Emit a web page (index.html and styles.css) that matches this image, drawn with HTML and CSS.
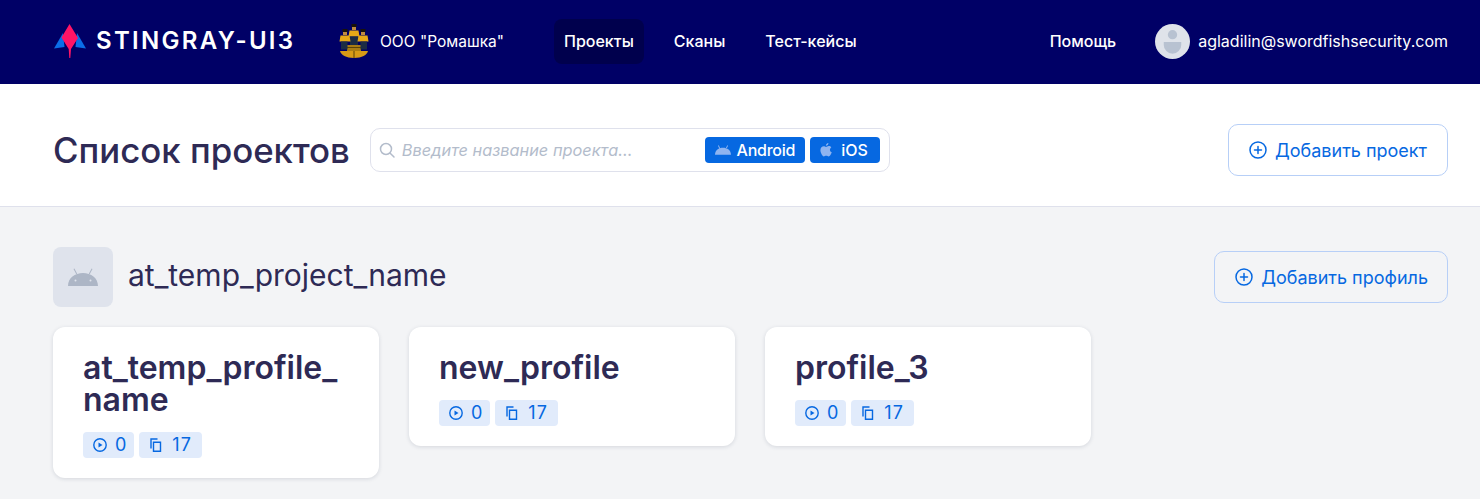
FILE: index.html
```html
<!DOCTYPE html>
<html lang="ru">
<head>
<meta charset="utf-8">
<title>Список проектов</title>
<link rel="stylesheet" href="styles.css">
</head>
<body>
<header class="topbar">
  <div class="brand">
    <svg class="brand-logo" viewBox="0 0 34 34" width="34" height="34">
      <path fill="#0b6ee8" d="M10 9 L1 24.500 L11.500 23 Z"/>
      <path fill="#0b6ee8" d="M24 9 L33 24.500 L22.500 23 Z"/>
      <path fill="#ff1466" d="M16.500 0 L25 14 L18 25 L17.300 34 L16.300 34 L15.700 25 L8.500 13.500 Z"/>
    </svg>
    <span class="brand-name">STINGRAY-UI3</span>
  </div>
  <div class="org">
    <svg class="org-logo" viewBox="0 0 30 34" width="30" height="34">
      <path fill="#d79a16" d="M1 27h28c-1 4-6 7-14 7S2 31 1 27z"/>
      <path fill="#a97c14" d="M8 21h14v6H8z"/>
      <path fill="#5a4208" d="M14.500 27h1v7h-1z"/>
      <path fill="#5a4208" d="M8 23h14v1H8z"/>
      <path fill="#1a1208" d="M12.500 0h5v3h-5z"/>
      <path fill="#c08a40" d="M13 3h4v3h-4z"/>
      <path fill="#e6a817" d="M10.500 6.500h9l1 6h-11z"/>
      <path fill="#1c2c44" d="M11 12.500h8v8.500h-8z"/>
      <path fill="#1a1208" d="M3.500 5h5v3h-5z"/>
      <path fill="#c08a40" d="M4 8h4v3H4z"/>
      <path fill="#e6a817" d="M1.500 11.500h9l1 6h-11z"/>
      <path fill="#1c2c44" d="M2 17.500h6.500v8H2z"/>
      <path fill="#1a1208" d="M21.500 5h5v3h-5z"/>
      <path fill="#c08a40" d="M22 8h4v3h-4z"/>
      <path fill="#e6a817" d="M19.500 11.500h9l1 6h-11z"/>
      <path fill="#1c2c44" d="M21.500 17.500H28v8h-6.500z"/>
    </svg>
    <span class="org-name">ООО "Ромашка"</span>
  </div>
  <nav class="nav">
    <a class="nav-item nav-item-active">Проекты</a>
    <a class="nav-item">Сканы</a>
    <a class="nav-item">Тест-кейсы</a>
  </nav>
  <div class="user-area">
    <a class="nav-item help">Помощь</a>
    <div class="user">
      <svg class="avatar" viewBox="0 0 36 36" width="35" height="35">
        <circle cx="18" cy="18" r="18" fill="#dfe3ea"/>
        <circle cx="18" cy="11" r="4.800" fill="#b8c2d1"/>
        <path fill="#b8c2d1" d="M9 18.500h18v3a9 9 0 0 1-18 0z"/>
      </svg>
      <span class="user-mail">agladilin@swordfishsecurity.com</span>
    </div>
  </div>
</header>

<section class="page-head">
  <h1 class="page-title">Список проектов</h1>
  <div class="search">
    <svg class="search-icon" viewBox="0 0 18 18" width="18" height="18">
      <circle cx="8" cy="8" r="5.500" fill="none" stroke="#b3bccb" stroke-width="1.500"/>
      <path d="M12.200 12.200 16 16" stroke="#b3bccb" stroke-width="1.500" stroke-linecap="round"/>
    </svg>
    <span class="search-text">Введите название проекта...</span>
    <span class="chip chip-android">
      <svg class="chip-icon" viewBox="0 0 30 18" width="16" height="10"><path fill="#8fb4f0" d="M0 18C0 10 7 5 15 5s15 5 15 13zM5.500 1l1.500-1 3 6-1.500 1zM24.500 1l-1.500-1-3 6 1.500 1z"/></svg>
      Android
    </span>
    <span class="chip chip-ios">
      <svg class="chip-icon" viewBox="0 0 12 14" width="12" height="14"><path fill="#8fb4f0" d="M8.400 0c.1 1.400-1 2.800-2.500 2.800C5.800 1.400 7 .1 8.400 0zM6 3.900c.6 0 1.500-.8 2.800-.8 1 0 1.900.5 2.500 1.300-2 1.200-1.700 4 .5 4.900-.6 1.700-1.800 4.100-3.200 4.100-.9 0-1.200-.6-2.400-.6s-1.600.6-2.400.6C2.600 13.400.4 10 .4 7.300c0-2.700 1.700-4.100 3.300-4.100 1 0 1.700.7 2.300.7z"/></svg>
      iOS
    </span>
  </div>
  <button class="add-btn" type="button">
    <svg class="plus-icon" viewBox="0 0 18 18" width="18" height="18"><circle cx="9" cy="9" r="8" fill="none" stroke="currentColor" stroke-width="1.500"/><path d="M9 5.500v7M5.500 9h7" stroke="currentColor" stroke-width="1.500" stroke-linecap="round"/></svg>
    Добавить проект
  </button>
</section>

<main class="content">
  <div class="project-head">
    <div class="project-icon">
      <svg viewBox="0 0 30 18" width="30" height="18"><path fill="#adb6c6" d="M0 18C0 10 7 5 15 5s15 5 15 13zM5.500 1l.9-.5 2.800 5.200-.9.500zM24.500 1l-.9-.5-2.800 5.200.9.500z"/><circle cx="7.500" cy="12.500" r="1" fill="#dfe3ec"/><circle cx="22.500" cy="12.500" r="1" fill="#dfe3ec"/></svg>
    </div>
    <h2 class="project-name">at_temp_project_name</h2>
    <button class="add-btn add-btn-profile" type="button">
      <svg class="plus-icon" viewBox="0 0 18 18" width="18" height="18"><circle cx="9" cy="9" r="8" fill="none" stroke="currentColor" stroke-width="1.500"/><path d="M9 5.500v7M5.500 9h7" stroke="currentColor" stroke-width="1.500" stroke-linecap="round"/></svg>
      Добавить профиль
    </button>
  </div>
  <div class="cards">
    <article class="card">
      <h3 class="card-title">at_temp_profile_<br>name</h3>
      <div class="tags">
        <span class="tag"><svg class="tag-icon" viewBox="0 0 14 14" width="14" height="14"><circle cx="7" cy="7" r="6.200" fill="none" stroke="currentColor" stroke-width="1.400"/><path fill="currentColor" d="M5.500 4.500 9.500 7l-4 2.500z"/></svg>0</span>
        <span class="tag tag-files"><svg class="tag-icon" viewBox="0 0 14 14" width="14" height="14"><path fill="none" stroke="currentColor" stroke-width="1.400" d="M4.500 4.200h7v9h-7zM2 10.500V1h6.500"/></svg>17</span>
      </div>
    </article>
    <article class="card">
      <h3 class="card-title">new_profile</h3>
      <div class="tags">
        <span class="tag"><svg class="tag-icon" viewBox="0 0 14 14" width="14" height="14"><circle cx="7" cy="7" r="6.200" fill="none" stroke="currentColor" stroke-width="1.400"/><path fill="currentColor" d="M5.500 4.500 9.500 7l-4 2.500z"/></svg>0</span>
        <span class="tag tag-files"><svg class="tag-icon" viewBox="0 0 14 14" width="14" height="14"><path fill="none" stroke="currentColor" stroke-width="1.400" d="M4.500 4.200h7v9h-7zM2 10.500V1h6.500"/></svg>17</span>
      </div>
    </article>
    <article class="card">
      <h3 class="card-title">profile_3</h3>
      <div class="tags">
        <span class="tag"><svg class="tag-icon" viewBox="0 0 14 14" width="14" height="14"><circle cx="7" cy="7" r="6.200" fill="none" stroke="currentColor" stroke-width="1.400"/><path fill="currentColor" d="M5.500 4.500 9.500 7l-4 2.500z"/></svg>0</span>
        <span class="tag tag-files"><svg class="tag-icon" viewBox="0 0 14 14" width="14" height="14"><path fill="none" stroke="currentColor" stroke-width="1.400" d="M4.500 4.200h7v9h-7zM2 10.500V1h6.500"/></svg>17</span>
      </div>
    </article>
  </div>
</main>
</body>
</html>
```
FILE: styles.css
```css
* { box-sizing: border-box; }
html, body { margin: 0; padding: 0; height: 100%; }
body {
  font-family: Inter, "Noto Sans", sans-serif;
  background: #f3f4f6;
  color: #2e2a55;
  overflow: hidden;
}
.topbar {
  display: flex;
  align-items: center;
  height: 84px;
  padding: 0 32px 2px 53px;
  background: #000066;
  color: #fff;
}
.brand { display: flex; align-items: center; width: 286px; }
.brand-logo { flex: none; margin-right: 9px; }
.brand-name { font-size: 24px; font-weight: 600; letter-spacing: 2.300px; line-height: 32px; white-space: nowrap; }
.org { display: flex; align-items: center; width: 215px; }
.org-logo { flex: none; margin-right: 11px; }
.org-name { font-size: 15.500px; font-weight: 400; white-space: nowrap; }
.nav { display: flex; gap: 20px; }
.nav-item { display: block; padding: 0 10px; height: 45px; line-height: 45px; font-size: 16px; font-weight: 500; border-radius: 8px; color: #fff; white-space: nowrap; }
.nav-item-active { background: #00004d; }
.user-area { display: flex; align-items: center; margin-left: auto; }
.help { margin-right: 29px; }
.user { display: flex; align-items: center; }
.avatar { flex: none; margin-right: 8px; }
.user-mail { font-size: 16px; font-weight: 400; white-space: nowrap; }

.page-head {
  display: flex;
  align-items: center;
  height: 123px;
  padding: 40px 32px 30px 53px;
  background: #fff;
  border-bottom: 1px solid #dfe1ec;
}
.page-title { flex: 0 0 296px; margin: 0 20px 0 0; font-size: 34.800px; font-weight: 500; line-height: 40px; white-space: nowrap; }
.search {
  display: flex;
  align-items: center;
  width: 520px;
  height: 44px;
  padding: 0 9px 0 7px;
  background: #fff;
  border: 1px solid #dfe1ec;
  border-radius: 10px;
}
.search-icon { flex: none; margin-right: 6px; }
.search-text { flex: 1; font-size: 16.350px; font-style: italic; color: #b3bccb; white-space: nowrap; }
.chip {
  display: flex;
  align-items: center;
  height: 26px;
  margin-left: 5px;
  padding: 0 10px;
  background: #0668e1;
  border-radius: 4px;
  color: #fff;
  font-size: 16px;
  font-weight: 500;
}
.chip-icon { margin-right: 6px; }
.chip-android { letter-spacing: -0.250px; }
.chip-ios { padding-right: 12px; }
.chip-ios .chip-icon { margin-right: 9px; }
.add-btn {
  display: flex;
  align-items: center;
  height: 52px;
  margin-left: auto;
  padding: 0 20px;
  background: transparent;
  border: 1px solid #b7cff7;
  border-radius: 10px;
  color: #0668e1;
  font-family: inherit;
  font-size: 18px;
  font-weight: 400;
  white-space: nowrap;
}
.add-btn-profile { padding-right: 19px; }
.plus-icon { margin-right: 8px; }
.content { padding: 40px 32px 0 53px; }
.project-head { display: flex; align-items: center; height: 60px; }
.project-icon {
  display: flex;
  align-items: center;
  justify-content: center;
  width: 60px;
  height: 60px;
  margin-right: 15px;
  background: #dfe3ec;
  border-radius: 8px;
}
.project-name { margin: 0 0 5px; font-size: 30px; font-weight: 400; line-height: 36px; }
.cards { display: flex; align-items: flex-start; gap: 30px; margin-top: 20px; }
.card {
  width: 326px;
  padding: 25px 30px 20px;
  background: #fff;
  border-radius: 12px;
  box-shadow: 0 1px 4px rgba(30, 40, 70, 0.14);
}
.card-title { margin: 0 0 15.500px; font-size: 32px; font-weight: 600; line-height: 32px; }
.tags { display: flex; gap: 5px; }
.tag {
  display: flex;
  align-items: center;
  height: 26.500px;
  padding: 0 8px 0 10px;
  background: #e1ebfb;
  border-radius: 4px;
  color: #0668e1;
  font-size: 18px;
  font-weight: 400;
}
.tag-icon { margin-right: 8px; }
.tag-files { padding-right: 10px; letter-spacing: 1px; }
.tag-files .tag-icon { margin-right: 9px; }
```
